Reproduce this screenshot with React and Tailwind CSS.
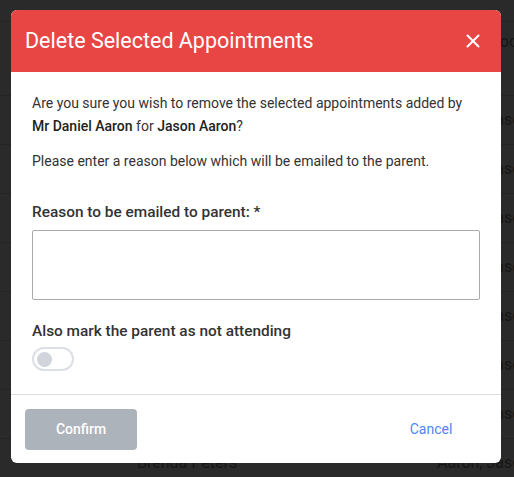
import { X } from "lucide-react";

const rows = Array.from({ length: 8 });

export default function App() {
  return (
    <div className="relative w-[514px] h-[477px] overflow-hidden bg-[#2a2a2a] font-['Roboto',sans-serif]">
      {/* dimmed page behind the dialog */}
      <div className="flex flex-col text-[16px] text-[#161616]">
        <div className="h-[22px] border-b border-[#242424]" />
        <div className="h-[74px] border-b border-[#242424] flex pt-[8px]">
          <span className="ml-[490px] whitespace-nowrap">Room</span>
        </div>
        {rows.map((_, i) => (
          <div key={i} className="h-[49px] border-b border-[#242424] flex items-center whitespace-nowrap">
            <span className="ml-[137px] w-[300px] shrink-0">{i === 7 ? "Brenda Peters" : ""}</span>
            <span className="shrink-0">Aaron, Jason</span>
          </div>
        ))}
      </div>

      {/* dialog */}
      <div className="absolute left-[11px] top-[10px] w-[490px] h-[453px] bg-white rounded-[6px] overflow-hidden flex flex-col">
        <div className="h-[62px] shrink-0 bg-[#e84545] flex items-center justify-between pl-[14px] pr-[17px]">
          <h2 className="text-white text-[21.5px] leading-none">Delete Selected Appointments</h2>
          <X size={22} strokeWidth={2.2} className="text-white" />
        </div>

        <div className="flex-1 px-[21px] pt-[20px] text-[14px] leading-[23px] text-[#333]">
          <p>
            Are you sure you wish to remove the selected appointments added by{" "}
            <span className="font-medium text-[#222]">Mr Daniel Aaron</span> for{" "}
            <span className="font-medium text-[#222]">Jason Aaron</span>?
          </p>
          <p className="mt-[12px]">Please enter a reason below which will be emailed to the parent.</p>

          <label className="block mt-[28px] text-[15.4px] font-medium text-[#333]">
            Reason to be emailed to parent: *
          </label>
          <textarea className="block mt-[6px] w-[448px] h-[70px] border border-[#aaa] rounded-[2px] resize-none" />

          <p className="mt-[20px] text-[15.4px] font-medium leading-[23px]">Also mark the parent as not attending</p>
          <div className="mt-[4px] w-[42px] h-[24px] rounded-full border-2 border-[#dcdfe3] flex items-center pl-[3px]">
            <span className="w-[15px] h-[15px] rounded-full bg-[#d1d5db]" />
          </div>
        </div>

        <div className="h-[69px] shrink-0 border-t border-[#dedede] flex items-start justify-between px-[14px] pt-[14px]">
          <button className="w-[112px] h-[41px] rounded-[4px] bg-[#adb3ba] text-white text-[14px] font-medium">
            Confirm
          </button>
          <button className="w-[112px] h-[41px] text-[#4f86f7] text-[14px]">Cancel</button>
        </div>
      </div>
    </div>
  );
}
